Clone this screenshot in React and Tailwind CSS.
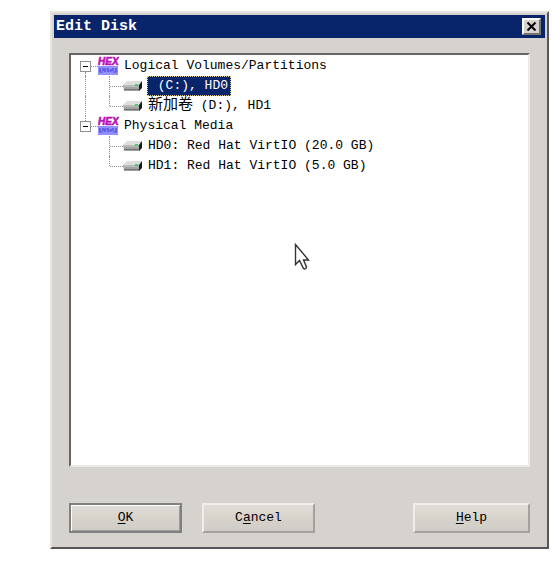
import React, { useState } from 'react';

const volumes = [
  {
    name: 'Logical Volumes/Partitions',
    disks: [
      { id: 'c', cjk: '', label: ' (C:), HD0' },
      { id: 'd', cjk: '新加卷', label: ' (D:), HD1' },
    ],
  },
  {
    name: 'Physical Media',
    disks: [
      { id: 'hd0', cjk: '', label: 'HD0: Red Hat VirtIO (20.0 GB)' },
      { id: 'hd1', cjk: '', label: 'HD1: Red Hat VirtIO (5.0 GB)' },
    ],
  },
];

const HexIcon = () => (
  <svg width="21" height="20" viewBox="0 0 21 20" className="shrink-0" aria-hidden="true">
    <rect y="10" width="20" height="9" fill="#9090ff" />
    <text x="0" y="9" fontFamily="Liberation Sans" fontWeight="bold" fontStyle="italic" fontSize="10" fill="#b810b8" stroke="#b810b8" strokeWidth="0.6">HEX</text>
    <path d="M2 12v4M5 12v3M7 13v3M10 12v4M13 13v2M15 12v3M18 12v4" stroke="#3c34d0" />
    <path d="M1 16h4M6 13h3M11 15h3M15 16h4" stroke="#5850e0" />
  </svg>
);

const DiskIcon = () => (
  <svg width="20" height="12" viewBox="0 0 20 12" className="shrink-0" aria-hidden="true">
    <path d="M4 1h15l-2 4H0z" fill="#dedede" />
    <path d="M0 5h17v5H1z" fill="#a4a4a4" />
    <path d="M1 6h14" stroke="#d0d0d0" />
    <path d="M19 1v7l-3 3V5z" fill="#1c1c1c" />
    <path d="M1 10h16" stroke="#444" />
    <path d="M12 5h3" stroke="#38d860" strokeWidth="2" />
  </svg>
);

const Cursor = () => (
  <svg width="18" height="28" viewBox="0 0 18 28" className="absolute left-[223px] top-[188px]" aria-hidden="true">
    <path d="M1.5 1.5v20l4-4 4 8c1 1 3 0 3-1.500l-3-7h5z" fill="#fff" stroke="#333" strokeWidth="1.4" />
  </svg>
);

const DialogButton = ({ before = '', hotkey, after, primary, className }) => (
  <button
    type="button"
    className={`h-[30px] text-center border-2 bg-linear-to-b from-[#e0dcd8] via-[#d8d3ca] to-[#cfccc8] ${primary ? 'border-[#808080] shadow-[inset_1px_1px_0_#fff,inset_-1px_-1px_0_#a09c98]' : 'border-t-[#f0eeec] border-l-[#f0eeec] border-r-[#a4a19d] border-b-[#a4a19d]'} ${className}`}
  >
    {before}<span className="underline underline-offset-2">{hotkey}</span>{after}
  </button>
);

const App = () => {
  const [selected, setSelected] = useState('c');

  return (
    <div className="min-h-screen flex flex-col bg-white pt-[11px] pr-[5px] pb-8 pl-[50px] font-['Liberation_Mono','Noto_Sans_CJK_SC',monospace] text-[13px] leading-5 text-black">
      <div role="dialog" aria-labelledby="title" className="grow flex flex-col bg-[#d6d3ce] border-2 border-t-[#e8e5e1] border-l-[#e8e5e1] border-r-[#55555a] border-b-[#55555a] p-0.5">
        {/* Title Bar */}
        <div className="h-[23px] flex items-center justify-between bg-[#08246b] pl-0.5 pr-1">
          <h1 id="title" className="text-[15px] font-bold text-white">Edit Disk</h1>
          <button type="button" aria-label="Close" className="w-[19px] h-[17px] flex items-center justify-center bg-[#d6d3ce] border-2 border-t-white border-l-white border-r-[#77736e] border-b-[#77736e]">
            <svg width="11" height="9" viewBox="0 0 11 9" aria-hidden="true">
              <path d="M1.5 0.5l8 8M9.5 0.5l-8 8" stroke="#000" strokeWidth="2" />
            </svg>
          </button>
        </div>

        <div className="grow flex flex-col pt-[15px] px-[15px] pb-3">
          {/* Disk Tree */}
          <div className="relative grow bg-white border-2 border-t-[#66666a] border-l-[#66666a] border-r-[#eceae6] border-b-[#eceae6] pt-px">
            <ul className="pl-px">
              {volumes.map((group, g) => (
                <li key={group.name}>
                  <div className="h-5 flex items-center pl-2">
                    <div className="w-[11px] h-full flex flex-col items-center">
                      <span className={`grow w-px border-l border-dotted ${g > 0 ? 'border-[#909090]' : 'border-transparent'}`}></span>
                      <button type="button" aria-label={`Collapse ${group.name}`} className="size-[11px] flex items-center justify-center border border-[#909090] bg-white">
                        <span className="w-[5px] h-px bg-black"></span>
                      </button>
                      <span className={`grow w-px border-l border-dotted ${g === 0 ? 'border-[#909090]' : 'border-transparent'}`}></span>
                    </div>
                    <span className="w-[7px] border-t border-dotted border-[#909090]"></span>
                    <HexIcon />
                    <span className="pl-[5px]">{group.name}</span>
                  </div>
                  <ul>
                    {group.disks.map((disk, i) => (
                      <li key={disk.id} className="h-5 flex items-center">
                        <span className={`w-[14px] h-full border-r border-dotted ${g === 0 ? 'border-[#909090]' : 'border-transparent'}`}></span>
                        <span className={`w-6 border-r border-dotted border-[#909090] self-start ${i === group.disks.length - 1 ? 'h-1/2' : 'h-full'}`}></span>
                        <span className="w-[13px] border-t border-dotted border-[#909090]"></span>
                        <DiskIcon />
                        <button
                          type="button"
                          onClick={() => setSelected(disk.id)}
                          className={`h-5 ml-1 flex items-center border border-dotted whitespace-pre ${selected === disk.id ? 'px-0.5 bg-[#08246b] text-white border-[#d8c890]' : 'border-transparent'}`}
                        >
                          {disk.cjk && <span className="text-[15px]">{disk.cjk}</span>}
                          {disk.label}
                        </button>
                      </li>
                    ))}
                  </ul>
                </li>
              ))}
            </ul>
            <Cursor />
          </div>

          {/* Buttons */}
          <div className="flex pt-9">
            <DialogButton primary hotkey="O" after="K" className="w-[113px]" />
            <DialogButton before="C" hotkey="a" after="ncel" className="w-[113px] ml-5" />
            <DialogButton hotkey="H" after="elp" className="w-[117px] ml-auto" />
          </div>
        </div>
      </div>
    </div>
  );
};
export default App;
